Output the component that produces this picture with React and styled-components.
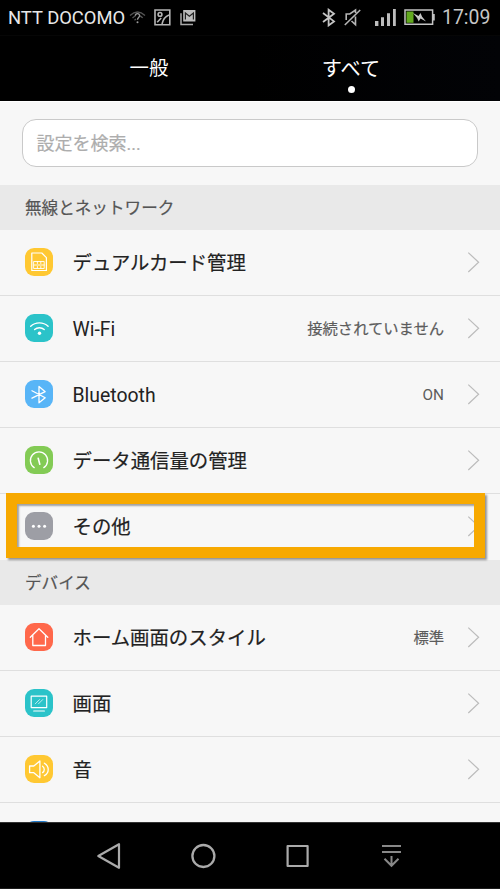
import React from 'react';
import styled, { createGlobalStyle } from 'styled-components';

const GlobalStyle = createGlobalStyle`
  * {
    box-sizing: border-box;
  }

  body {
    margin: 0;
    background-color: #000;
    font-family: Roboto, "Noto Sans CJK JP", sans-serif;
  }

  svg {
    display: block;
    flex-shrink: 0;
  }
`;

const Phone = styled.div`
  width: 500px;
  height: 889px;
  display: flex;
  flex-direction: column;
  overflow: hidden;
  background-color: #f7f7f7;
`;

const StatusBar = styled.div`
  height: 36px;
  flex-shrink: 0;
  display: flex;
  align-items: center;
  justify-content: space-between;
  padding: 0 9px 0 8px;
  background-color: #000;
  border-bottom: 1px solid #060606;
  color: #e8e8e8;
`;

const StatusGroup = styled.div`
  display: flex;
  align-items: center;
`;

const Carrier = styled.span`
  width: 121px;
  font-size: 18.4px;
  line-height: 36px;
  white-space: nowrap;
`;

const Clock = styled.span`
  width: 49px;
  margin-left: 7px;
  padding-top: 1px;
  font-size: 19.4px;
  line-height: 36px;
  color: #c6c6c6;
  white-space: nowrap;
`;

const Tabs = styled.div`
  height: 65px;
  flex-shrink: 0;
  display: grid;
  grid-template-columns: 202px 202px;
  justify-content: center;
  background: linear-gradient(90deg, #000 50%, #020306);
`;

const Tab = styled.div`
  display: flex;
  flex-direction: column;
  align-items: center;
  padding-top: 19px;
  font-size: ${(props) => (props.$active ? 20.2 : 19.4)}px;
  line-height: 28px;
  color: #fff;
`;

const Dot = styled.div`
  width: 7px;
  height: 7px;
  margin-top: 3px;
  border-radius: 50%;
  background-color: #fff;
`;

const SearchArea = styled.div`
  height: 84px;
  flex-shrink: 0;
  padding: 17px 22px 0;
  border-top: 1px solid #fff;
`;

const SearchBox = styled.div`
  height: 48px;
  padding-left: 13.5px;
  border: 1px solid #c9c9c9;
  border-radius: 14px;
  background-color: #fff;
  font-size: 18px;
  line-height: 48px;
  color: #adadad;
  -webkit-text-stroke: 0.2px;
`;

const SectionTitle = styled.div`
  height: 45px;
  flex-shrink: 0;
  padding: 1px 0 0 25px;
  background-color: #e9e9e9;
  font-size: 16.6px;
  line-height: 45px;
  color: #555;
  -webkit-text-stroke: 0.2px;
`;

const List = styled.div`
  flex: 1;
  min-height: 0;
  overflow: hidden;
`;

const Row = styled.div`
  position: relative;
  height: 66px;
  display: flex;
  align-items: center;
  padding: 0 20px 1px 25px;
  border-bottom: 1px solid ${(props) => (props.$last ? 'transparent' : '#dfdfdf')};
`;

const IconBox = styled.div`
  width: 28px;
  height: 28px;
  flex-shrink: 0;
  border-radius: 9px;
  background-color: ${(props) => props.$color};
`;

const Label = styled.div`
  flex: 1;
  margin-left: 19.5px;
  padding-top: 3px;
  font-size: 19.4px;
  line-height: 28px;
  color: #222;
  -webkit-text-stroke: ${(props) => (props.$latin ? 0 : 0.2)}px;
`;

const Value = styled.div`
  margin-right: 23px;
  padding-top: 2px;
  font-size: 15.3px;
  line-height: 24px;
  color: #5c5c5c;
  -webkit-text-stroke: ${(props) => (props.$latin ? 0 : 0.2)}px;
`;

const Highlight = styled.div`
  position: absolute;
  top: -1px;
  left: 6px;
  width: 479px;
  height: 65px;
  border: 11px solid #f7a900;
  box-shadow: 2px 2px 2px rgba(0, 0, 0, 0.4), inset 2px 2px 2px rgba(0, 0, 0, 0.35);
`;

const NavBar = styled.div`
  height: 67px;
  flex-shrink: 0;
  display: grid;
  grid-template-columns: repeat(4, 94px);
  align-items: center;
  justify-content: center;
  justify-items: center;
  background-color: #000;
  border-top: 1px solid #333;
  border-bottom: 1px solid #1c1c1c;
`;

const StatusIcon = styled.svg`
  margin-left: ${(props) => props.$gap || 0}px;
`;

const glyphs = {
  sim: (
    <>
      <path d="M6.8 5h10l4.6 4.6v12.9H6.8z" strokeWidth="1.2" />
      <path d="M9 13.5h10.2v7H9zM9 17h10.2M12.4 13.5v2M15.8 13.5v2M12.4 18.5v2M15.8 18.5v2" strokeWidth="0.9" />
    </>
  ),
  wifi: (
    <>
      <path d="M5.7 12.3c4.8-4.6 12.6-4.6 17.4 0M9.6 15.6c2.7-2.5 6.9-2.5 9.6 0" strokeWidth="1.4" />
      <circle cx="14.5" cy="19.3" r="1.7" fill="#fff" stroke="none" />
    </>
  ),
  bluetooth: <path d="M7 10.7l13.2 7-6.2 5.1V6.4l6.2 5.3L7 18.2" strokeWidth="1.3" />,
  gauge: (
    <>
      <path d="M9.2 21.6a8.6 8.6 0 1 1 9.6 0" strokeWidth="1.3" />
      <path d="M13.2 12.2l1.6 6" strokeWidth="1.6" />
    </>
  ),
  more: (
    <g fill="#fff" stroke="none">
      <circle cx="8.4" cy="14.3" r="1.5" />
      <circle cx="14" cy="14.3" r="1.5" />
      <circle cx="19.6" cy="14.3" r="1.5" />
    </g>
  ),
  home: <path d="M5.3 14.2L14 5.7l8.8 8.5M7.8 12.3v10.2h12.7V12.3" strokeWidth="1.3" />,
  screen: (
    <>
      <path d="M6.2 7.2h15.5v11.4H6.2zM8.7 22h10.7" strokeWidth="1.2" />
      <path d="M10.3 14.8l4.2-4.2M13.5 14.8l4.2-4.2" strokeWidth="0.7" />
    </>
  ),
  sound: <path d="M4.6 11v6.7h4.2l6.1 5V6l-6.1 5zM17.6 11.2c2.2 1.6 2.2 4.8 0 6.4M19.4 8.2c5.1 3.1 5.1 9.4 0 12.4" strokeWidth="1.3" />,
};

const wireless = [
  { icon: 'sim', color: '#ffc832', label: 'デュアルカード管理' },
  { icon: 'wifi', color: '#2bc3c9', label: 'Wi-Fi', value: '接続されていません', latinLabel: true },
  { icon: 'bluetooth', color: '#58b5f7', label: 'Bluetooth', value: 'ON', latinLabel: true, latinValue: true },
  { icon: 'gauge', color: '#83cb55', label: 'データ通信量の管理' },
  { icon: 'more', color: '#9d9ea5', label: 'その他', highlight: true },
];

const device = [
  { icon: 'home', color: '#ff684b', label: 'ホーム画面のスタイル', value: '標準' },
  { icon: 'screen', color: '#2bc3c9', label: '画面' },
  { icon: 'sound', color: '#ffc832', label: '音' },
  { color: '#1e78c8', label: '' },
];

function SettingRow({ item }) {
  return (
    <Row $last={item.highlight}>
      <IconBox $color={item.color}>
        <svg width="28" height="28" fill="none" stroke="#fff" strokeLinecap="round" strokeLinejoin="round">
          {glyphs[item.icon]}
        </svg>
      </IconBox>
      <Label $latin={item.latinLabel}>{item.label}</Label>
      {item.value && <Value $latin={item.latinValue}>{item.value}</Value>}
      <svg width="13" height="22" fill="none" stroke="#bcbcbc" strokeWidth="1.2">
        <path d="M1.3 1.6L11.6 11.3 1.3 21" />
      </svg>
      {item.highlight && <Highlight />}
    </Row>
  );
}

export default function App() {
  return (
    <Phone>
      <GlobalStyle />
      <StatusBar>
        <StatusGroup>
          <Carrier>NTT DOCOMO</Carrier>
          {/* wifi com interrogação */}
          <StatusIcon width="17" height="16" fill="none" stroke="#555" strokeWidth="1.3">
            <path d="M1 5.5Q8.5-1.5 16 5.5M3.5 8Q5 6.3 6.5 5.8M11 5.8Q12.8 6.7 13.7 8M5.5 10.3L7 9" />
            <path d="M6.3 5.8c.2-3 4.4-2.7 4.3 0-.1 1.7-2.1 1.7-2.1 4" stroke="#999" />
            <circle cx="8.5" cy="12.3" r="1" fill="#999" stroke="none" />
          </StatusIcon>
          <StatusIcon $gap={8} width="17" height="17" fill="none" stroke="#b5b5b5" strokeWidth="1.6">
            <path d="M1 1h14.8v14.8H1zM3.2 13.2l4-4.2M8 15c1-4.5 3-7.5 7-9" />
            <circle cx="6" cy="5.4" r="1.9" />
          </StatusIcon>
          <StatusIcon $gap={9} width="17" height="17">
            <path d="M1 4.2v11.2h12" fill="none" stroke="#aaa" strokeWidth="1.5" />
            <path d="M3.2 1h12.2v11.5H3.2z" fill="#bdbdbd" />
            <path d="M5.4 10.5V4l4 3.3 4-3.3v6.5" fill="none" stroke="#222" strokeWidth="1.2" />
          </StatusIcon>
        </StatusGroup>
        <StatusGroup>
          <StatusIcon width="14" height="19" fill="none" stroke="#c4c4c4" strokeWidth="1.8">
            <path d="M1 5l11 8.4-5.4 4V1.7l5.4 4L1 14" />
          </StatusIcon>
          <StatusIcon $gap={8} width="17" height="19" fill="none" stroke="#b5b5b5" strokeWidth="1.6">
            <path d="M.8 17L16.2 2M2.2 12V6h3.6L11.5 2V5M11.5 8.5v8.2L7.5 13" />
          </StatusIcon>
          <StatusIcon $gap={14} width="21" height="19" fill="#bdbdbd">
            <path d="M0 13h3.4v5H0zM6 9.3h3v8.7H6zM12 5.3h3V18h-3zM18 1h2.8v17H18z" />
          </StatusIcon>
          <StatusIcon $gap={8} width="31" height="17">
            <path d="M1 1h27.6v14.2H1zM30 5v6.5" fill="none" stroke="#c4c4c4" strokeWidth="1.5" />
            <path d="M2.5 2.5h7v11.3h-7z" fill="#62a91f" />
            <path d="M9 4l5.5 3 2-3 1.6 3.7L22 12.6l-5.5-3-1.8 3-1.6-3.6z" fill="#c8c8c8" />
          </StatusIcon>
          <Clock>17:09</Clock>
        </StatusGroup>
      </StatusBar>
      <Tabs>
        <Tab>一般</Tab>
        <Tab $active>
          すべて
          <Dot />
        </Tab>
      </Tabs>
      <SearchArea>
        <SearchBox>設定を検索...</SearchBox>
      </SearchArea>
      <List>
        <SectionTitle>無線とネットワーク</SectionTitle>
        {wireless.map((item) => (
          <SettingRow key={item.label} item={item} />
        ))}
        <SectionTitle>デバイス</SectionTitle>
        {device.map((item) => (
          <SettingRow key={item.label} item={item} />
        ))}
      </List>
      <NavBar>
        <svg width="26" height="28" fill="none" stroke="#aaa" strokeWidth="2.2" strokeLinejoin="round">
          <path d="M2.3 14L23 2.2v23.6z" />
        </svg>
        <svg width="26" height="26" fill="none" stroke="#aaa" strokeWidth="2.3">
          <circle cx="13.4" cy="13" r="11" />
        </svg>
        <svg width="24" height="24" fill="none" stroke="#aaa" strokeWidth="2.2" strokeLinejoin="round">
          <path d="M2.6 2h20v20h-20z" />
        </svg>
        <svg width="20" height="24" fill="none" stroke="#888" strokeWidth="2">
          <path d="M1 2h19M1 8h19M10.5 12v10M3.5 14.8l7 7 7-7" />
        </svg>
      </NavBar>
    </Phone>
  );
}
